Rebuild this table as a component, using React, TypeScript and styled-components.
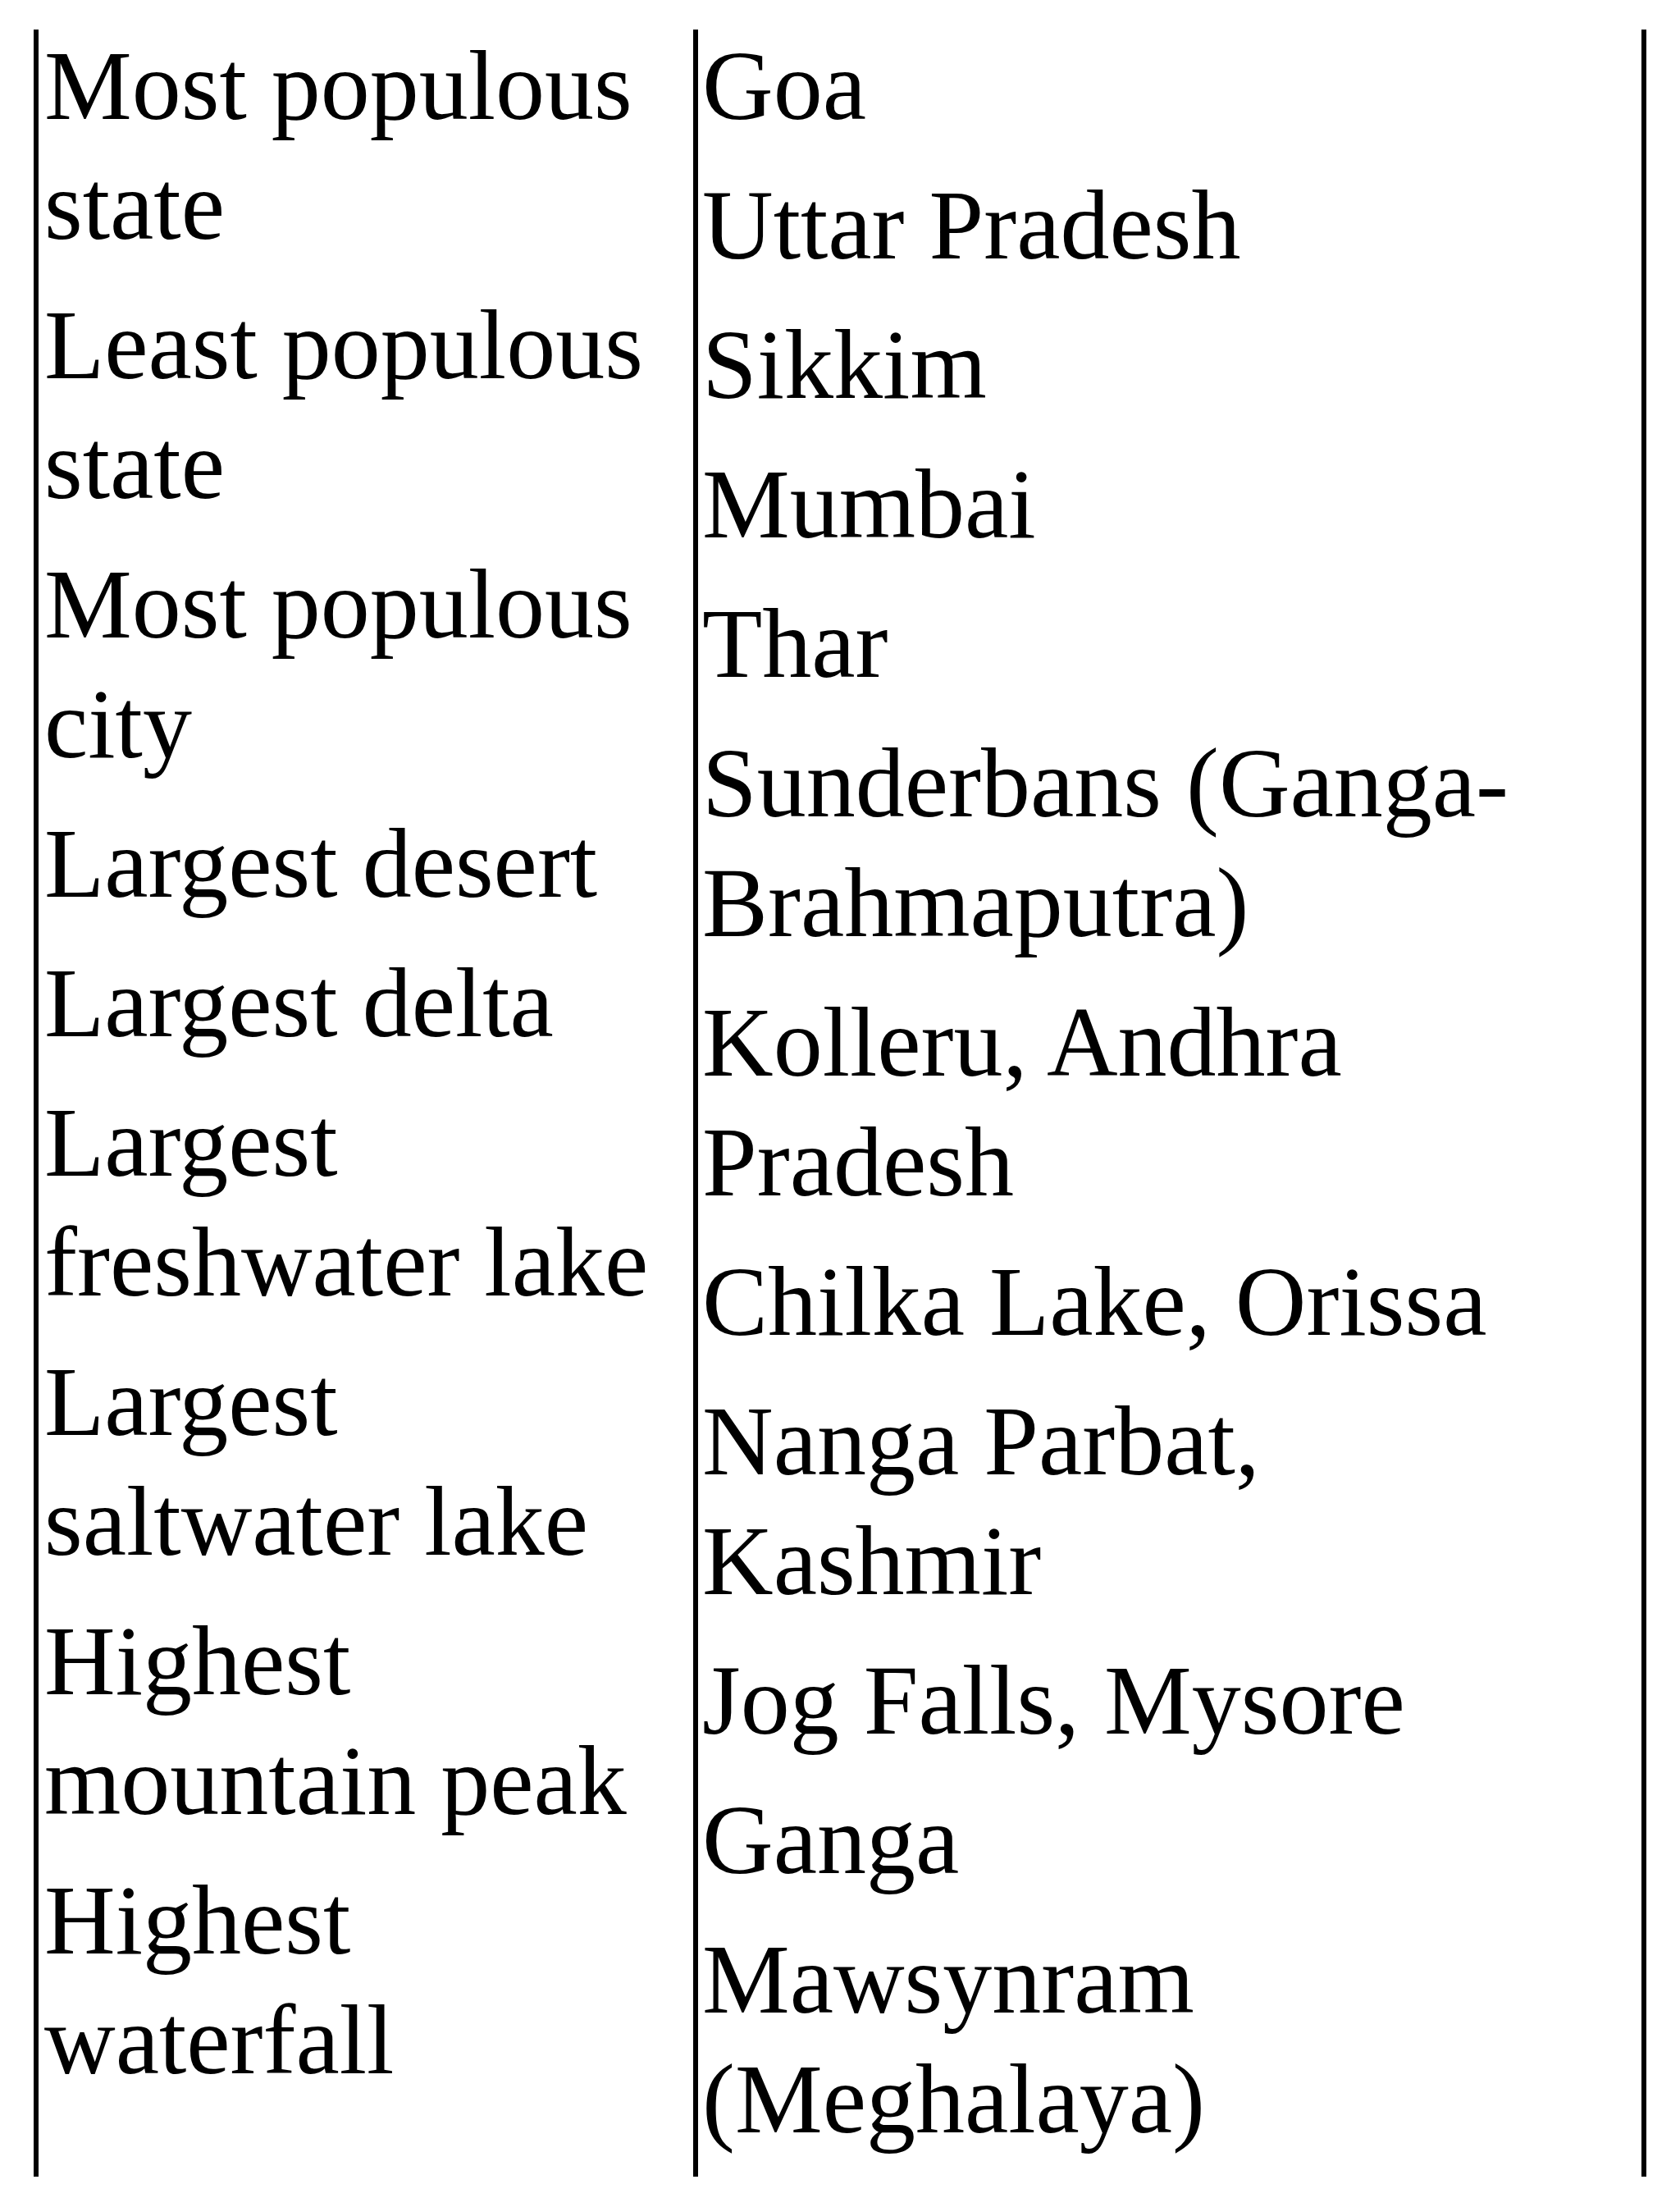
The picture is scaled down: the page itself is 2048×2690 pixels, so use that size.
import React from "react";
import styled, { createGlobalStyle } from "styled-components";

const GlobalStyle = createGlobalStyle`
  html, body {
    margin: 0;
    padding: 0;
    background: #ffffff;
  }
  body {
    font-family: "Liberation Serif", "Times New Roman", serif;
    color: #000000;
  }
`;

const Page = styled.div`
  padding: 36px 0 0 41px;
  background: #ffffff;
`;

const Table = styled.div`
  display: flex;
  height: 2617px;
  width: 1966px;
  box-sizing: border-box;
  border-left: 6px solid #000;
  border-right: 6px solid #000;
`;

const Column = styled.div<{ $width: number; $pad: number; $divider?: boolean }>`
  box-sizing: border-box;
  width: ${(p) => p.$width}px;
  flex: none;
  padding-left: ${(p) => p.$pad}px;
  border-right: ${(p) => (p.$divider ? "6px solid #000" : "none")};
`;

const List = styled.div`
  display: flex;
  flex-direction: column;
  gap: 24px;
  margin-top: -4px;
`;

const Item = styled.p`
  margin: 0;
  font-family: "Liberation Serif", "Times New Roman", serif;
  font-size: 120px;
  line-height: 146px;
  color: #000;
  white-space: nowrap;
`;

const left: string[][] = [
  ["Most populous", "state"],
  ["Least populous", "state"],
  ["Most populous", "city"],
  ["Largest desert"],
  ["Largest delta"],
  ["Largest", "freshwater lake"],
  ["Largest", "saltwater lake"],
  ["Highest", "mountain peak"],
  ["Highest", "waterfall"],
];

const right: string[][] = [
  ["Goa"],
  ["Uttar Pradesh"],
  ["Sikkim"],
  ["Mumbai"],
  ["Thar"],
  ["Sunderbans (Ganga-", "Brahmaputra)"],
  ["Kolleru, Andhra", "Pradesh"],
  ["Chilka Lake, Orissa"],
  ["Nanga Parbat,", "Kashmir"],
  ["Jog Falls, Mysore"],
  ["Ganga"],
  ["Mawsynram", "(Meghalaya)"],
];

const Entry = ({ lines }: { lines: string[] }) => (
  <Item>
    {lines.map((l, i) => (
      <React.Fragment key={i}>
        {i > 0 && <br />}
        {l}
      </React.Fragment>
    ))}
  </Item>
);

export default function App() {
  return (
    <>
      <GlobalStyle />
      <Page>
        <Table>
          <Column $width={804} $pad={7} $divider>
            <List>
              {left.map((lines, i) => (
                <Entry key={i} lines={lines} />
              ))}
            </List>
          </Column>
          <Column $width={1150} $pad={5}>
            <List>
              {right.map((lines, i) => (
                <Entry key={i} lines={lines} />
              ))}
            </List>
          </Column>
        </Table>
      </Page>
    </>
  );
}
